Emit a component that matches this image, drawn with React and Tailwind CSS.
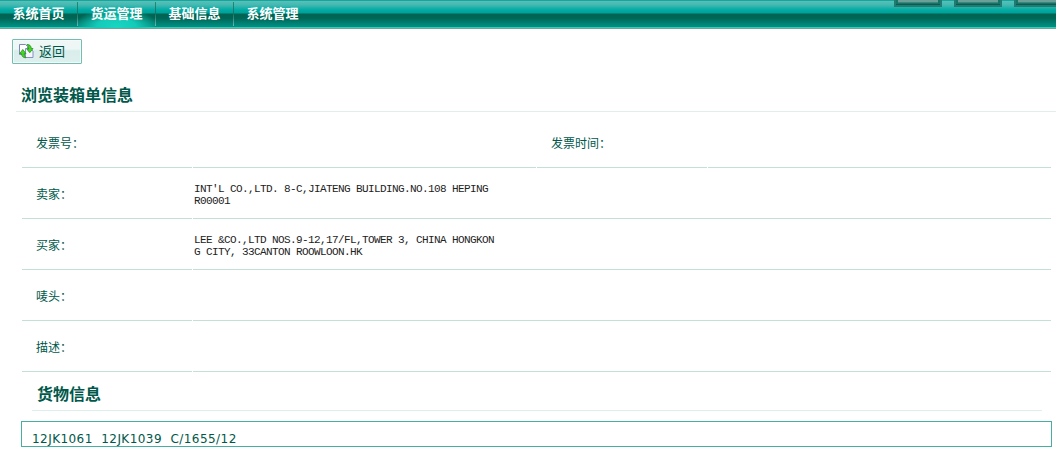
const cn = "font-['Noto_Sans_CJK_SC',sans-serif]";
const rule = "border-b border-[#c3dfd6]";

function NavItem({ label, active, last }) {
  return (
    <div className="flex h-full shrink-0">
      <div className={"flex h-full w-[77px] justify-center text-[13px] leading-[26px] font-bold text-white " + (active ? "bg-[radial-gradient(ellipse_42px_19px_at_50%_95%,#18d6c2_0%,#14cbb9_45%,#14cbb900_100%)]" : "")}>
        <span className="whitespace-nowrap">{label}</span>
      </div>
      {!last && <i className="mt-[2px] h-6 w-px bg-linear-to-b from-[#26887e] via-[#1b7165] to-[#69b9ae]" />}
    </div>
  );
}

function Tab() {
  return (
    <div className="h-[7px] w-12 shrink-0 border-2 border-t-0 border-[#227b70] bg-[#157467] px-[2px] pb-[1px] shadow-[inset_0_-1px_0_#0d5b50]">
      <div className="h-[3px] border-b border-[#3b877d] bg-[#6b9f98]" />
    </div>
  );
}

function ReturnIcon() {
  return (
    <svg width="15" height="15" viewBox="0 0 15 15" className="shrink-0">
      <path d="M.5.5h6l2 2v8h-8z" fill="#fff" stroke="#7d87b8" />
      <path d="M6.500 4.500h5l2.500 2.500v6.500h-7.500z" fill="#f5f6ff" stroke="#8790c0" />
      <path d="M8 .5c3 0 4 1.500 4.300 4H14L10.800 8.700 7.800 5h1.800C9.600 3.500 9.300 2 8 .5z" fill="#46d824" stroke="#23901a" strokeWidth=".8" />
      <path d="M7 13.800c-3 0-4.300-1.500-4.500-4.300H.7L3.800 5.500 7 9.500H5.200c0 1.700.4 3 1.800 4.300z" fill="#46d824" stroke="#23901a" strokeWidth=".8" />
    </svg>
  );
}

function Row({ label, children }) {
  return (
    <div className="flex h-[51px] gap-px">
      <div className={"flex w-[170px] items-center pl-[14px] " + rule}><span className="pt-[2px]">{label}</span></div>
      <div className={"flex min-w-0 flex-1 items-center pl-px " + rule}>
        <div className="pt-[3px] font-['Liberation_Mono',monospace] text-[11px] leading-3 tracking-[-0.6px] whitespace-pre text-[#222]">{children}</div>
      </div>
    </div>
  );
}

export default function App() {
  return (
    <main className={"h-[452px] w-[1056px] overflow-hidden bg-white text-[12px] text-[#00584a] " + cn}>
      <header className="flex h-[29px] justify-between border-b border-[#6aa79b] bg-[linear-gradient(180deg,#12a99c_0px,#12a99c_1px,#5bbfb8_1px,#42b9b2_5px,#00aaa2_10px,#00a099_13px,#006352_14px,#006555_18px,#008477_24px,#009184_27px,#38cab5_27px,#38cab5_28px)]">
        <nav className="flex h-7">
          <NavItem label="系统首页" />
          <NavItem label="货运管理" active />
          <NavItem label="基础信息" />
          <NavItem label="系统管理" last />
        </nav>
        <div className="flex w-[162px] gap-3 overflow-hidden">
          <Tab /><Tab /><Tab />
        </div>
      </header>

      <button className="mt-[10px] ml-3 flex h-[25px] w-[70px] items-center gap-[5px] rounded-[1px] border border-[#73bdb1] bg-[linear-gradient(180deg,#f0f7f6_0%,#edf7f5_38%,#d9edeb_48%,#dff0ed_100%)] pl-[6px] text-[13px] text-[#00584a] shadow-[inset_0_0_0_1px_#f3faf8]">
        <ReturnIcon />
        <span className="pb-[2px] leading-5">返回</span>
      </button>

      <h1 className="ml-4 h-12 border-b border-[#e1efeb] pt-[18px] pl-[5px] text-[16px] leading-6 font-bold">浏览装箱单信息</h1>

      <section className="ml-[22px] w-[1029px]">
        <div className="flex h-14 gap-px">
          <div className={"flex w-[170px] items-center pl-[14px] " + rule}><span className="pt-[6px]">发票号：</span></div>
          <div className={"w-[343px] " + rule} />
          <div className={"flex w-[170px] items-center pl-[14px] " + rule}><span className="pt-[6px]">发票时间：</span></div>
          <div className={"flex-1 " + rule} />
        </div>
        <Row label="卖家：">{"INT'L CO.,LTD. 8-C,JIATENG BUILDING.NO.108 HEPING\nR00001"}</Row>
        <Row label="买家：">{"LEE &CO.,LTD NOS.9-12,17/FL,TOWER 3, CHINA HONGKON\nG CITY, 33CANTON ROOWLOON.HK"}</Row>
        <Row label="唛头：" />
        <Row label="描述：" />
      </section>

      <h2 className="ml-8 h-[39px] w-[1010px] border-b border-[#dcefea] pt-[9px] pl-[5px] text-[16px] leading-6 font-bold">货物信息</h2>
      <div className="mt-[10px] ml-[21px] h-[26px] w-[1031px] border border-[#47afa1] pt-[9px] pl-[10px] font-['DejaVu_Sans',sans-serif] text-[12px] leading-4 tracking-[0.44px] whitespace-pre">{"12JK1061  12JK1039  C/1655/12"}</div>
    </main>
  );
}
